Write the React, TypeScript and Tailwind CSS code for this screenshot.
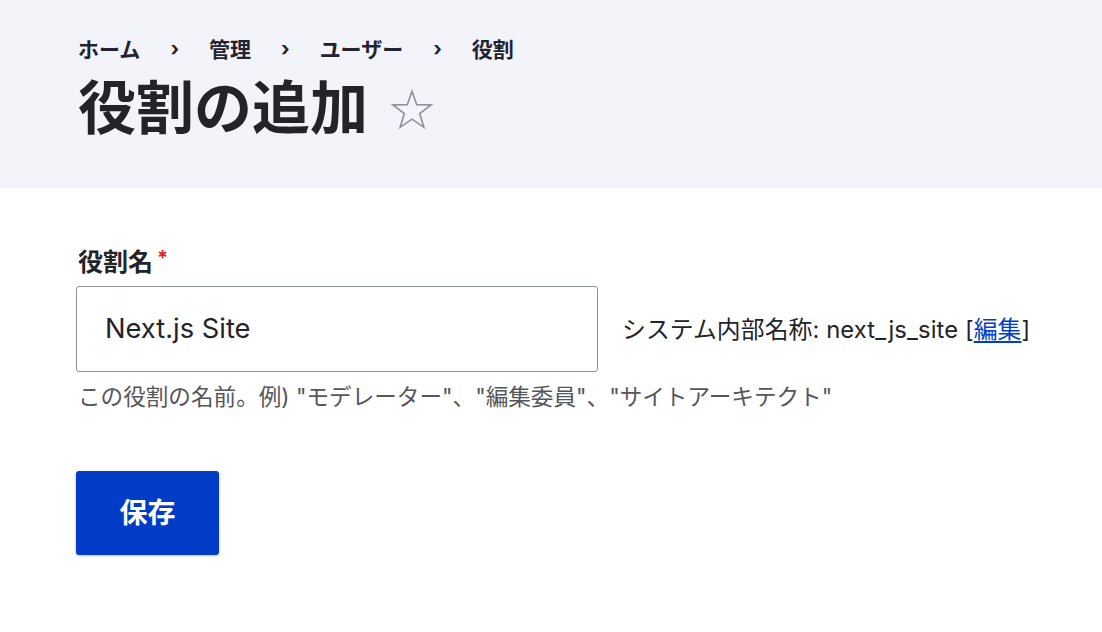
export default function App() {
  const font = { fontFamily: 'Inter, "Noto Sans CJK JP", sans-serif' };
  return (
    <div className="w-[1102px] h-[632px] bg-white text-[#232429]" style={font}>
      <div className="h-[188px] bg-[#f3f4f9] pl-[78px] pt-[34px]">
        <nav className="flex items-center h-[30px] text-[21px] font-bold text-[#222330] leading-none">
          <span>ホーム</span>
          <span className="mx-[30px] text-[20px]">›</span>
          <span>管理</span>
          <span className="mx-[30px] text-[20px]">›</span>
          <span>ユーザー</span>
          <span className="mx-[30px] text-[20px]">›</span>
          <span>役割</span>
        </nav>
        <div className="flex items-center mt-[9px] h-[70px]">
          <h1 className="text-[58px] font-bold leading-none tracking-[0px]">役割の追加</h1>
          <svg className="ml-[22px] mt-[4px]" width="44" height="42" viewBox="0 0 24 23">
            <path
              d="M12 1.2 L14.6 8.6 L22.5 8.7 L16.2 13.4 L18.5 21 L12 16.5 L5.5 21 L7.8 13.4 L1.5 8.7 L9.4 8.6 Z"
              fill="none"
              stroke="#8e929c"
              strokeWidth="0.9"
              strokeLinejoin="miter"
            />
          </svg>
        </div>
      </div>
      <div className="pl-[76px] pt-[58px]">
        <label className="flex items-start text-[25px] font-bold leading-[32px] pl-[2px]">
          役割名
          <span className="ml-[4px] text-[#dc2323] text-[20px] leading-[24px]">*</span>
        </label>
        <div className="flex items-center mt-[8px]">
          <div className="w-[522px] h-[86px] border border-[#8e929c] rounded-[3px] flex items-center pl-[28px] text-[27.3px] text-[#232429]">
            Next.js Site
          </div>
          <div className="ml-[24px] text-[23.8px] tracking-[0.1px] text-[#232429] pt-[2px]">
            システム内部名称: next_js_site [<a className="text-[#003ecc] underline underline-offset-[3px]">編集</a>]
          </div>
        </div>
        <p className="mt-[10px] text-[22.6px] text-[#55565b] pl-[2px] leading-[30px]">
          この役割の名前。例) "モデレーター"、"編集委員"、"サイトアーキテクト"
        </p>
        <button className="mt-[59px] w-[143px] h-[84px] bg-[#003cc5] rounded-[3px] text-white text-[28px] font-bold shadow-[0_1px_3px_rgba(0,0,0,0.25)]">
          保存
        </button>
      </div>
    </div>
  );
}
